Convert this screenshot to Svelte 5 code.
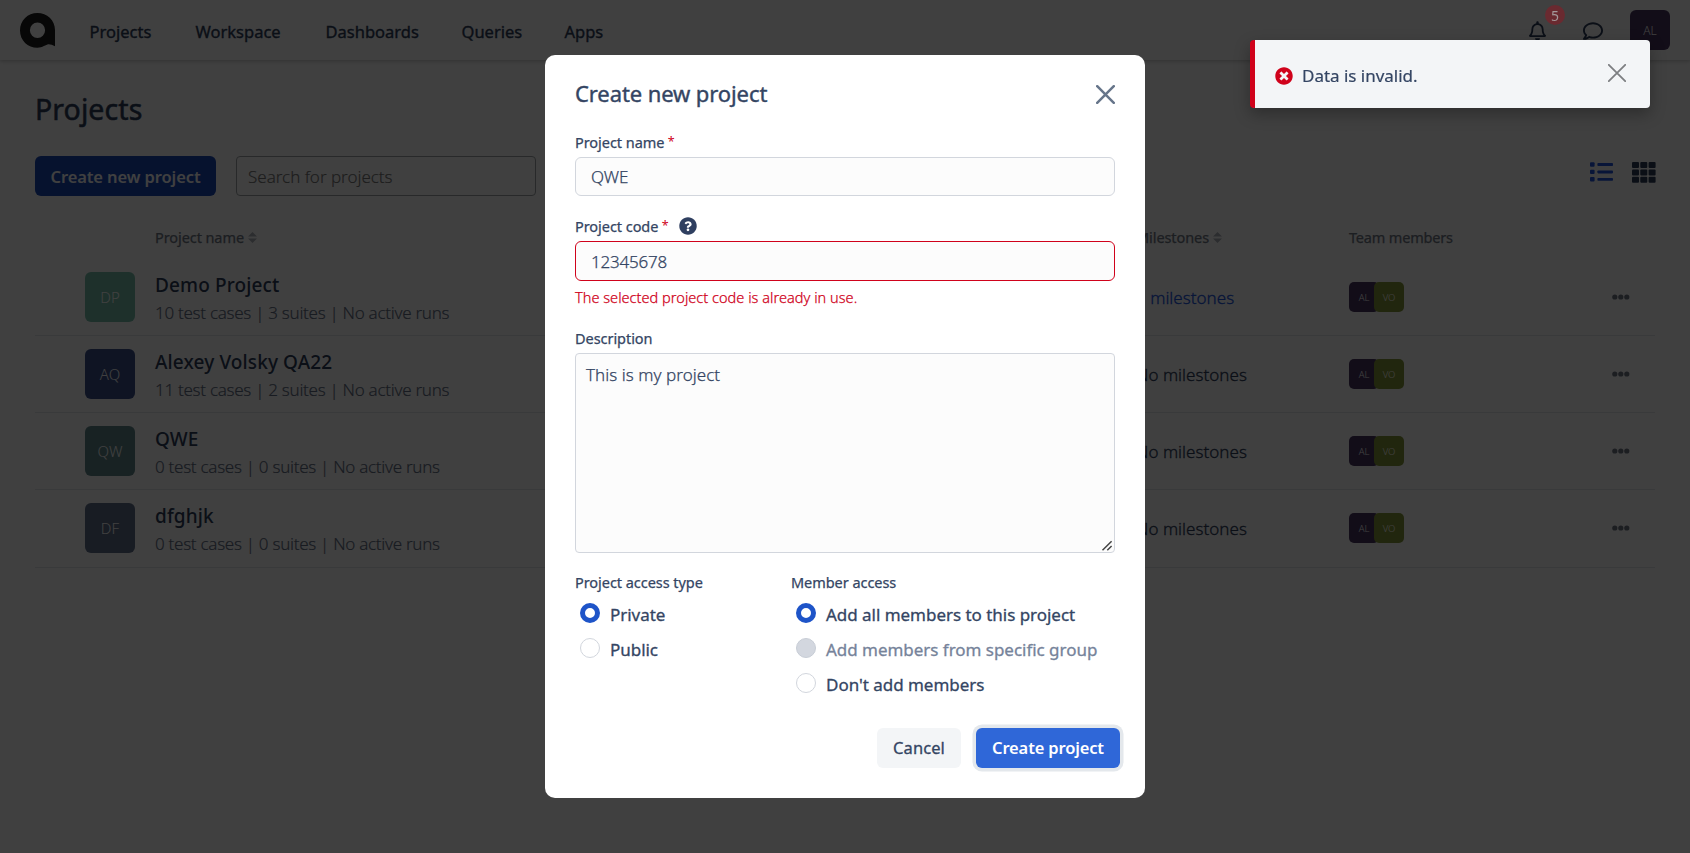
<script>
  const nav = ['Projects', 'Workspace', 'Dashboards', 'Queries', 'Apps'];
  const projects = [
    { code: 'DP', color: '#78c0ac', name: 'Demo Project', info: '10 test cases | 3 suites | No active runs', milestones: '1 milestones', link: true },
    { code: 'AQ', color: '#3c508c', name: 'Alexey Volsky QA22', info: '11 test cases | 2 suites | No active runs', milestones: 'No milestones' },
    { code: 'QW', color: '#60888c', name: 'QWE', info: '0 test cases | 0 suites | No active runs', milestones: 'No milestones' },
    { code: 'DF', color: '#60708c', name: 'dfghjk', info: '0 test cases | 0 suites | No active runs', milestones: 'No milestones' }
  ];
  const cells = [0, 1, 2];
  let name = $state('QWE');
  let code = $state('12345678');
  let description = $state('This is my project');
  let access = $state('private');
  let members = $state('all');
</script>

{#snippet sort()}
  <svg class="sort" width="9" height="11" viewBox="0 0 9 11"><path d="M4.5 0 9 4.6H0zM4.5 11 0 6.4h9z" fill="#b0b4bb" /></svg>
{/snippet}

<div class="page">
  <header>
    <svg class="logo" width="35" height="35" viewBox="0 0 35 35">
      <path fill-rule="evenodd" fill="#1c1c1c" d="M17.4 0C27 0 35 7.3 35 17v16.3q-3.6-2.2-6.6-2.1c-2.4.3-6 3.5-11 3.5C7.8 34.7 0 27.4 0 17.4S7.8 0 17.4 0zM17.5 9.6a7.6 7.7 0 1 0 0 15.4 7.6 7.7 0 0 0 0-15.4z" />
    </svg>
    <nav>
      {#each nav as item}<a href="#top">{item}</a>{/each}
    </nav>
    <div class="tools">
      <svg class="bell" width="17" height="20" viewBox="0 0 448 512"><path fill="#2c3c5a" d="M439.39 362.29c-19.32-20.76-55.47-51.99-55.47-154.29 0-77.7-54.48-139.9-127.94-155.16V32c0-17.67-14.32-32-31.98-32s-31.98 14.33-31.98 32v20.84C118.56 68.1 64.08 130.3 64.08 208c0 102.3-36.15 133.53-55.47 154.29-6 6.45-8.66 14.16-8.61 21.71.11 16.4 12.98 32 32.1 32h383.8c19.12 0 32-15.6 32.1-32 .05-7.55-2.61-15.27-8.61-21.71zM67.53 368c21.22-27.97 44.42-74.33 44.53-159.42 0-.2-.06-.38-.06-.58 0-61.86 50.14-112 112-112s112 50.14 112 112c0 .2-.06.38-.06.58.11 85.1 23.31 131.46 44.53 159.42H67.53zM224 512c35.32 0 63.97-28.65 63.97-64H160.03c0 35.35 28.65 64 63.97 64z" /></svg>
      <svg class="chat" width="20" height="20" viewBox="0 0 512 512"><path fill="#2c3c5a" d="M256 32C114.6 32 0 125.1 0 240c0 47.6 19.9 91.2 52.9 126.3C38 405.7 7 439.1 6.5 439.5c-6.6 7-8.4 17.2-4.6 26S14.4 480 24 480c61.5 0 110-25.7 139.1-46.3C192 442.8 223.2 448 256 448c141.4 0 256-93.1 256-208S397.4 32 256 32zm0 368c-26.7 0-53.1-4.1-78.4-12.1l-22.7-7.2-19.5 13.8c-14.3 10.1-33.9 21.4-57.5 29 7.3-12.1 14.4-25.7 19.9-40.2l10.6-28.1-20.6-21.8C69.7 314.1 48 282.2 48 240c0-88.2 93.3-160 208-160s208 71.8 208 160-93.3 160-208 160z" /></svg>
      <span class="me">AL</span>
    </div>
  </header>

  <main>
    <h1>Projects</h1>
    <div class="toolbar">
      <button class="new">Create new project</button>
      <input class="search" placeholder="Search for projects" />
      <div class="views">
        <svg width="24" height="20" viewBox="0 0 24 20" fill="#2055e0">
          {#each cells as r}
            <rect x="0" y={r * 7.4 + 0.3} width="4.6" height="4.4" rx="1" />
            <rect x="7.4" y={r * 7.4 + 1.1} width="15.6" height="2.9" rx="0.8" />
          {/each}
        </svg>
        <svg width="24" height="21" viewBox="0 0 24 21" fill="#2c3c5a">
          {#each cells as r}{#each cells as c}<rect x={c * 8.3} y={r * 7.4} width="7" height="6" rx="1" />{/each}{/each}
        </svg>
      </div>
    </div>

    <div class="row head">
      <span></span>
      <span>Project name{@render sort()}</span>
      <span>Milestones{@render sort()}</span>
      <span>Team members</span>
      <span></span>
    </div>
    {#each projects as p}
      <div class="row">
        <span class="avatar" style="background:{p.color}">{p.code}</span>
        <div class="project">
          <strong>{p.name}</strong>
          <small>{p.info}</small>
        </div>
        <span class="ms" class:link={p.link}>{p.milestones}</span>
        <div class="team"><span class="al">AL</span><span class="vo">VO</span></div>
        <svg class="dots" width="18" height="6" viewBox="0 0 18 6" fill="#6f7785"><circle cx="2.8" cy="3" r="2.6" /><circle cx="8.8" cy="3" r="2.6" /><circle cx="14.8" cy="3" r="2.6" /></svg>
      </div>
    {/each}
  </main>
</div>

<div class="overlay">
  <form class="modal" onsubmit={(e) => e.preventDefault()}>
    <div class="top">
      <h2>Create new project</h2>
      <svg width="19" height="19" viewBox="0 0 19 19"><path d="M1.2 1.2 17.8 17.8M17.8 1.2 1.2 17.8" stroke="#66758a" stroke-width="2.5" stroke-linecap="round" /></svg>
    </div>

    <label class="caption" for="name">Project name<i>*</i></label>
    <input id="name" class="field" bind:value={name} />

    <label class="caption" for="code">Project code<i>*</i>
      <svg class="help" width="18" height="18" viewBox="0 0 512 512"><path fill="#2f3f60" d="M504 256c0 136.997-111.043 248-248 248S8 392.997 8 256C8 119.083 119.043 8 256 8s248 111.083 248 248z" /><path fill="#fff" transform="translate(256 262) scale(.84) translate(-256 -262)" d="M262.655 90c-54.497 0-89.255 22.957-116.549 63.758-3.536 5.286-2.353 12.415 2.715 16.258l34.699 26.31c5.205 3.947 12.621 3.008 16.665-2.122 17.864-22.658 30.113-35.797 57.303-35.797 20.429 0 45.698 13.148 45.698 32.958 0 14.976-12.363 22.667-32.534 33.976C247.128 238.528 216 254.941 216 296v4c0 6.627 5.373 12 12 12h56c6.627 0 12-5.373 12-12v-1.333c0-28.462 83.186-29.647 83.186-106.667 0-58.002-60.165-102-116.531-102zM256 338c-25.365 0-46 20.635-46 46 0 25.364 20.635 46 46 46s46-20.636 46-46c0-25.365-20.635-46-46-46z" /></svg>
    </label>
    <input id="code" class="field invalid" bind:value={code} />
    <p class="error">The selected project code is already in use.</p>

    <label class="caption" for="desc">Description</label>
    <textarea id="desc" bind:value={description}></textarea>

    <div class="groups">
      <div class="group">
        <div class="caption">Project access type</div>
        <label class="radio"><input type="radio" bind:group={access} value="private" /><span>Private</span></label>
        <label class="radio"><input type="radio" bind:group={access} value="public" /><span>Public</span></label>
      </div>
      <div class="group">
        <div class="caption">Member access</div>
        <label class="radio"><input type="radio" bind:group={members} value="all" /><span>Add all members to this project</span></label>
        <label class="radio off"><input type="radio" bind:group={members} value="group" disabled /><span>Add members from specific group</span></label>
        <label class="radio"><input type="radio" bind:group={members} value="none" /><span>Don't add members</span></label>
      </div>
    </div>

    <div class="actions">
      <button type="button" class="cancel">Cancel</button>
      <button type="submit" class="create">Create project</button>
    </div>
  </form>
</div>

<span class="badge">5</span>

<div class="toast">
  <svg width="18" height="18" viewBox="0 0 512 512"><path fill="#d0021b" d="M256 8C119 8 8 119 8 256s111 248 248 248 248-111 248-248S393 8 256 8zm121.6 313.1c4.7 4.7 4.7 12.3 0 17L338 377.6c-4.7 4.7-12.3 4.7-17 0L256 312l-65.1 65.6c-4.7 4.7-12.3 4.7-17 0L134.4 338c-4.7-4.7-4.7-12.3 0-17l65.6-65-65.6-65.1c-4.7-4.7-4.7-12.3 0-17l39.6-39.6c4.7-4.7 12.3-4.7 17 0l65 65.7 65.1-65.6c4.7-4.7 12.3-4.7 17 0l39.6 39.6c4.7 4.7 4.7 12.3 0 17L312 256l65.6 65.1z" /></svg>
  <span>Data is invalid.</span>
  <svg class="dismiss" width="18" height="18" viewBox="0 0 18 18"><path d="M.8.8 17.2 17.2M17.2.8.8 17.2" stroke="#7d7f82" stroke-width="1.8" stroke-linecap="round" /></svg>
</div>

<style>
  :global(body) { margin: 0; overflow: hidden; background: #fff; }
  :global(#app) { font-family: "Noto Sans", "Open Sans", sans-serif; color: #2c3c5a; }
  * { box-sizing: border-box; }
  input, button, textarea { font-family: inherit; color: inherit; margin: 0; }
  .page { height: 853px; }

  header { height: 60px; display: flex; align-items: center; padding: 0 20px; box-shadow: 0 1px 4px rgba(0, 0, 0, .25); }
  .logo { margin-top: 1px; }
  nav { display: grid; grid-template-columns: 106px 130px 136px 103px 60px; margin-left: 34.5px; padding-top: 2px; }
  nav a { color: inherit; text-decoration: none; font-size: 16.5px; font-weight: 400; -webkit-text-stroke: .35px; }
  .tools { margin-left: auto; display: flex; align-items: center; }
  .bell { margin-right: 37px; margin-top: 2px; }
  .chat { margin-right: 27px; margin-top: 1px; }
  .me { width: 40px; height: 40px; border-radius: 6px; background: #483460; color: #fff; font-size: 12px; font-weight: 300; display: flex; align-items: center; justify-content: center; }

  main { padding: 29px 35px 0; }
  h1 { margin: 0 0 27px; font-size: 28.5px; font-weight: 400; line-height: 40px; letter-spacing: .08px; -webkit-text-stroke: .5px; }
  .toolbar { display: flex; height: 40px; align-items: center; }
  .new { width: 181px; height: 40px; padding: 0; border: 0; border-radius: 6px; background: #1848b8; color: #fff; font-size: 16.5px; font-weight: 600; letter-spacing: -.1px; }
  .search { width: 300px; height: 40px; margin-left: 20px; padding: 0 11px; border: 1px solid #a0a4a8; border-radius: 4px; background: transparent; font-size: 17px; font-weight: 300; letter-spacing: -.02px; outline: 0; }
  .search::placeholder { color: #757575; -webkit-text-stroke: .15px; }
  .views { margin-left: auto; display: flex; align-items: center; gap: 18px; transform: translate(1px, -4px); }

  .row { height: 77px; display: grid; grid-template-columns: 50px 980px 214px 260px 1fr; column-gap: 0; align-items: center; padding-left: 50px; border-bottom: 1px solid #e4e6ea; }
  .row:last-child { height: 78px; padding-bottom: 1px; }
  .head { height: 63px; padding-top: 18px; border: 0; font-size: 14.5px; letter-spacing: -.08px; color: #6f7785; -webkit-text-stroke: .25px; }
  .head span:nth-child(2), .project { padding-left: 20px; }
  .head span:nth-child(3), .ms { padding-left: 21px; }
  .sort { margin-left: 4px; }
  .avatar { width: 50px; height: 50px; border-radius: 6px; color: #fff; font-size: 15px; font-weight: 300; padding-bottom: 1px; display: flex; align-items: center; justify-content: center; }
  .project { display: flex; flex-direction: column; padding-top: 2px; }
  .project strong { font-size: 19px; font-weight: 500; line-height: 28px; letter-spacing: .12px; }
  .project small { font-size: 17px; font-weight: 300; line-height: 27px; letter-spacing: -.28px; color: #5f6c82; -webkit-text-stroke: .15px; }
  .ms { font-size: 17px; font-weight: 300; letter-spacing: .02px; -webkit-text-stroke: .3px; }
  .link { color: #2055e0; }
  .team { display: flex; padding-left: 20px; }
  .head span:nth-child(4) { padding-left: 20px; letter-spacing: -.18px; }
  .team span { width: 30px; height: 30px; border-radius: 5px; color: #fff; font-size: 9.5px; font-weight: 300; display: flex; align-items: center; justify-content: center; }
  .al { background: #483460; }
  .vo { background: #849838; margin-left: -5px; }
  .dots { margin-left: 23px; }

  .overlay { position: fixed; inset: 0; background: rgba(0, 0, 0, .75); display: flex; justify-content: center; align-items: flex-start; padding-top: 55px; }
  .modal { width: 600px; height: 743px; padding: 18px 30px 30px; background: #fff; border-radius: 10px; color: #344563; }
  .top { height: 41px; margin-bottom: 18px; display: flex; align-items: center; justify-content: space-between; }
  .top svg { margin-top: 2px; }
  h2 { margin: -2px 0 0; font-size: 22px; font-weight: 400; letter-spacing: -.1px; -webkit-text-stroke: .4px; }
  .caption { display: flex; align-items: center; height: 21px; margin-bottom: 4px; padding-bottom: 2px; font-size: 14.5px; font-weight: 400; letter-spacing: -.05px; white-space: pre; -webkit-text-stroke: .25px; }
  .caption i { font-style: normal; color: #d0021b; margin: -1px 0 0 3.5px; font-size: 12.5px; -webkit-text-stroke: 0; }
  .help { margin-left: 10px; }
  .field { display: block; width: 540px; height: 39px; margin-bottom: 20px; padding: 0 15px; border: 1px solid #d2d6dd; border-radius: 6px; background: #fcfcfc; font-size: 17px; font-weight: 300; letter-spacing: -.1px; outline: 0; -webkit-text-stroke: .25px; }
  .invalid { height: 40px; border-color: #d0021b; margin-bottom: 7px; letter-spacing: -.2px; }
  .error { margin: 0 0 20px; height: 20px; line-height: 18px; font-size: 14.5px; font-weight: 300; letter-spacing: .04px; color: #d0021b; -webkit-text-stroke: .25px; }
  textarea { display: block; width: 540px; height: 200px; padding: 8px 10px; border: 1px solid #d2d6dd; border-radius: 4px; background: #fcfcfc; font-size: 17px; font-weight: 300; line-height: 25px; letter-spacing: .05px; outline: 0; -webkit-text-stroke: .25px; }
  textarea::-webkit-resizer { background: url("data:image/svg+xml,%3Csvg xmlns='http://www.w3.org/2000/svg' width='15' height='15'%3E%3Cpath d='M3.5 13.3 12.6 4.2M8.3 13.3 12.6 9' stroke='%23454545' stroke-width='1.5'/%3E%3C/svg%3E") no-repeat; }
  .groups { display: grid; grid-template-columns: 216px 1fr; margin-top: 20px; height: 128px; }
  .groups .caption { margin-bottom: 2px; padding-bottom: 3px; }
  .radio { display: flex; align-items: center; height: 35px; padding-left: 5px; gap: 10px; font-size: 17px; font-weight: 400; letter-spacing: -.03px; -webkit-text-stroke: .3px; }
  .radio span { padding-top: 1px; }
  .radio input { appearance: none; width: 20px; height: 20px; margin-top: -1px; border: 1px solid #d2d6dd; border-radius: 50%; background: #fff; }
  .radio input:checked { border: 5.5px solid #1e54c8; }
  .radio input:disabled { background: #d3d7df; border-color: #c8cdd6; }
  .off { color: #76839a; }
  .actions { display: flex; justify-content: flex-end; gap: 15px; margin: 27px -5px 0 0; }
  .actions button { height: 40px; padding: 0 0 1px; border: 0; border-radius: 6px; font-size: 16.5px; white-space: nowrap; }
  .cancel { width: 84px; background: #f3f5f7; font-weight: 400; letter-spacing: .1px; -webkit-text-stroke: .3px; }
  .actions .create { width: 144px; background: #2f67d8; color: #fff; font-weight: 600; letter-spacing: -.15px; box-shadow: 0 0 0 3.5px #e4e8ec; }

  .badge { position: fixed; left: 1545px; top: 5px; width: 20px; height: 20px; border-radius: 50%; background: #6a2a30; color: #a3989a; font-size: 14px; display: flex; align-items: center; justify-content: center; }

  .toast { position: fixed; left: 1250px; top: 40px; width: 400px; height: 68px; display: flex; align-items: center; padding: 3px 24px 0 20px; background: #f3f5f7; border-left: 5px solid #d0021b; border-radius: 4px; box-shadow: 0 6px 16px rgba(0, 0, 0, .3); color: #344563; }
  .toast span { margin: -1px 0 0 9px; font-size: 17px; font-weight: 400; letter-spacing: -.02px; -webkit-text-stroke: .2px; }
  .dismiss { margin-left: auto; margin-bottom: 5px; }
</style>
